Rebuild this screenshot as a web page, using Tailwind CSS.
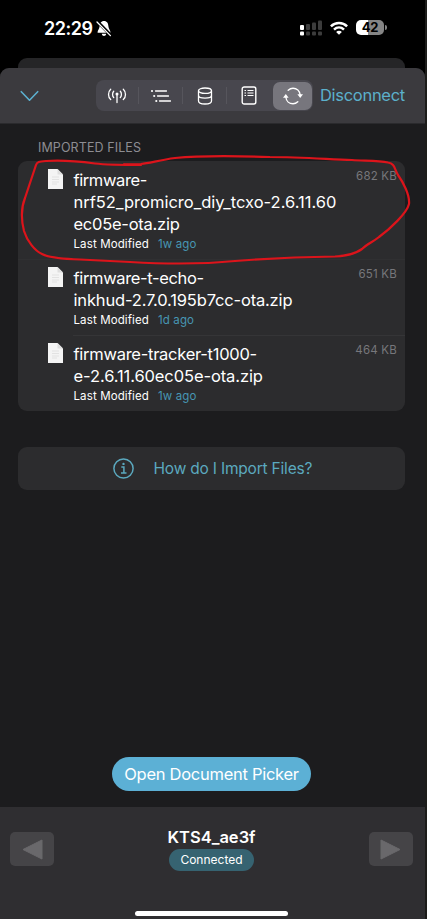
<!DOCTYPE html>
<html lang="en">
<head>
<meta charset="utf-8">
<title>Imported Files</title>
<script src="https://cdn.jsdelivr.net/npm/@tailwindcss/browser@4"></script>
</head>
<body class="bg-[#1c1c1a] w-[427px] h-[919px] overflow-hidden font-['Inter',sans-serif] text-white">
<div class="relative w-[425px] h-[919px] bg-black flex flex-col whitespace-nowrap">
  <!-- status bar -->
  <div class="h-[58px] shrink-0 flex justify-between pl-[44px] pr-[38px]">
    <div class="flex items-center h-[56px]">
      <span class="text-[18px] font-semibold tracking-[-0.5px] w-[52px]">22:29</span>
      <svg class="w-[16px] h-[17px]" viewBox="0 0 16 17"><path d="M8 1C5 1 3.7 3.5 3.6 6.2C3.5 9 1.6 10.3 1.6 12V12.8H14.4V12C14.4 10.3 12.5 9 12.4 6.2C12.3 3.5 11 1 8 1ZM5.8 13.8C6 15.2 7 16 8 16S10 15.2 10.2 13.8Z" fill="#fff"/><path d="M1.2 1.4L15 15.4" stroke="#000" stroke-width="3.2"/><path d="M1 2L14.4 15.6" stroke="#fff" stroke-width="1.3" stroke-linecap="round"/></svg>
    </div>
    <div class="flex items-center h-[55px]">
      <svg class="w-[22px] h-[16px] mr-[8px]" viewBox="0 0 22 16"><g fill="#fff"><rect y="5" width="4" height="5" rx="1"/><rect y="11.5" width="4" height="4" rx="1"/></g><g fill="#3c3c3c"><rect x="6" y="4" width="4" height="6" rx="1"/><rect x="12" y="2.500" width="4" height="7.500" rx="1"/><rect x="18" y=".5" width="4" height="9.500" rx="1"/><rect x="6" y="11.500" width="4" height="4" rx="1"/><rect x="12" y="11.500" width="4" height="4" rx="1"/><rect x="18" y="11.500" width="4" height="4" rx="1"/></g></svg>
      <svg class="w-[18px] h-[14px] mr-[8px]" viewBox="0 0 18 14" fill="none" stroke="#fff" stroke-width="2.500"><path d="M.9 5.300C5.400.8 12.600.8 17.100 5.300M4 8.600C6.900 5.800 11.100 5.800 14 8.600"/><path d="M9 13.700L6.100 10.900C7.700 9.400 10.300 9.400 11.900 10.900Z" fill="#fff" stroke="none"/></svg>
      <div class="w-[28px] h-[15px] rounded-[5px] bg-[linear-gradient(90deg,#fff_42%,#858585_42%)] text-black text-[13px] font-bold tracking-[-0.3px] leading-[15px] text-center">42</div>
      <div class="w-[2px] h-[5px] bg-[#858585] rounded-r-full ml-[1px]"></div>
    </div>
  </div>
  <div class="h-[10px] shrink-0 mx-[18px] mr-[20px] rounded-t-[9px] bg-[#252527]"></div>

  <div class="flex-1 flex flex-col bg-[#1c1c1e] rounded-t-[9px] overflow-hidden">
    <!-- toolbar -->
    <div class="h-[56px] shrink-0 bg-[#3b3a3e] border-b border-[#2a2a2d] flex items-center pl-[20px]">
      <svg class="w-[19px] h-[12px]" viewBox="0 0 19 12" fill="none" stroke="#5cb0cf" stroke-width="1.600" stroke-linecap="round" stroke-linejoin="round"><path d="M1.300 1.700L9.500 10.200L17.700 1.700"/></svg>
      <div class="ml-[57px] w-[217px] h-[31px] rounded-[8px] bg-[#48474e] flex items-center">
        <div class="w-[42px] flex justify-center">
          <svg class="w-[20px] h-[16px]" viewBox="0 0 20 16" fill="none" stroke="#fff" stroke-width="1.300" stroke-linecap="round"><path d="M10 6V14.500M6.700 3.300C5.200 4.900 5.200 7.900 6.700 9.500M13.300 3.300C14.800 4.900 14.800 7.900 13.300 9.500M3.700 1.200C.8 3.900.8 8.900 3.700 11.600M16.300 1.200C19.200 3.900 19.200 8.900 16.300 11.600"/><circle cx="10" cy="6" r="1.500" fill="#fff" stroke="none"/></svg>
        </div>
        <div class="w-px h-[17px] bg-[#56555c]"></div>
        <div class="w-[43px] flex justify-center">
          <svg class="w-[22px] h-[14px]" viewBox="0 0 22 14" fill="none" stroke="#fff" stroke-width="1.300" stroke-linecap="round"><path d="M5.500 2H16.500M7.500 7H18.500M9.500 12H20.500"/><g fill="#fff" stroke="none"><circle cx="2" cy="2" r="1.100"/><circle cx="4.200" cy="7" r="1.100"/><circle cx="6.300" cy="12" r="1.100"/></g></svg>
        </div>
        <div class="w-px h-[17px] bg-[#56555c]"></div>
        <div class="w-[43px] flex justify-center">
          <svg class="w-[16px] h-[18px]" viewBox="0 0 16 18" fill="none" stroke="#fff" stroke-width="1.300"><ellipse cx="8" cy="3.700" rx="6.500" ry="2.700"/><path d="M1.500 3.700V14C1.500 15.800 4.300 17 8 17S14.500 15.800 14.500 14V3.700M1.500 8.300C1.500 10 4.300 11.200 8 11.200S14.500 10 14.500 8.300"/></svg>
        </div>
        <div class="w-px h-[17px] bg-[#56555c]"></div>
        <div class="w-[43px] flex justify-center">
          <svg class="w-[16px] h-[19px]" viewBox="0 0 16 19" fill="none" stroke="#fff" stroke-width="1.400"><rect x="1.200" y="1" width="13.600" height="17" rx="2"/><path d="M3.500 4.500H5M3.500 7H5M3.500 9.500H5M6.500 4.500H12.500M6.500 7H12.500M6.500 9.500H12.500" stroke-width="1.200"/></svg>
        </div>
        <div class="w-[39px] h-[28px] ml-[3px] rounded-[7px] bg-[#77767d] flex items-center justify-center">
          <svg class="w-[20px] h-[18px]" viewBox="0 0 20 18" fill="none" stroke="#fff" stroke-width="1.400" stroke-linecap="round"><path d="M5.200 3.200C6.600 1.900 8.200 1.200 10 1.200C13.700 1.200 16.700 4 17.200 8M14.800 14.800C13.400 16.100 11.800 16.800 10 16.800C6.300 16.800 3.300 14 2.800 10"/><path d="M0 10.700L2.800 7L5.600 10.700ZM14.400 7.300L17.200 11L20 7.300Z" fill="#fff" stroke="none"/></svg>
        </div>
      </div>
      <span class="ml-[7px] text-[16.5px] tracking-[-0.3px] text-[#5cb0cb]">Disconnect</span>
    </div>

    <!-- file list -->
    <div class="pl-[18px] pr-[20px] pt-[14px]">
      <div class="pl-[20px] h-[23px] leading-[20px] text-[12.5px] tracking-[0.1px] text-[#8d8d92]">IMPORTED FILES</div>
      <div class="h-[250px] rounded-[9px] bg-[#2c2c2e]">
        <div class="flex h-[98px] pt-[8px] pl-[30px] pr-[8px]">
          <svg class="w-[15px] h-[20px] shrink-0" viewBox="0 0 15 20"><path d="M0 0H9.500L15 5.500V20H0Z" fill="#f4f4f4"/><path d="M9.500 0V5.500H15" fill="#dedede"/><path d="M4 8H11M4 10.500H11M4 13H11M4 15H9" stroke="#e2e2e2"/></svg>
          <div class="ml-[10.5px] flex-1 w-0">
            <div class="text-[16.500px] leading-[22px]"><span class="tracking-[-0.4px]">firmware-</span><br><span class="tracking-[0px]">nrf52_promicro_diy_tcxo-2.6.11.60</span><br><span class="tracking-[-0.25px]">ec05e-ota.zip</span></div>
            <div class="text-[11.500px] leading-[18px] tracking-[0.12px]">Last Modified<span class="text-[#4796b3] ml-[9px]">1w ago</span></div>
          </div>
          <div class="text-[11.500px] leading-[15px] tracking-[0.2px] text-[#77777b]">682 KB</div>
        </div>
        <div class="flex h-[76px] pt-[7px] pl-[30px] pr-[8px] border-t border-[#303032]">
          <svg class="w-[15px] h-[20px] shrink-0" viewBox="0 0 15 20"><path d="M0 0H9.500L15 5.500V20H0Z" fill="#f4f4f4"/><path d="M9.500 0V5.500H15" fill="#dedede"/><path d="M4 8H11M4 10.500H11M4 13H11M4 15H9" stroke="#e2e2e2"/></svg>
          <div class="ml-[10.5px] flex-1 w-0">
            <div class="text-[16.500px] leading-[22px]"><span class="tracking-[-0.35px]">firmware-t-echo-</span><br><span class="tracking-[-0.17px]">inkhud-2.7.0.195b7cc-ota.zip</span></div>
            <div class="text-[11.500px] leading-[18px] tracking-[0.12px]">Last Modified<span class="text-[#4796b3] ml-[9px]">1d ago</span></div>
          </div>
          <div class="text-[11.500px] leading-[15px] tracking-[0.2px] text-[#77777b]">651 KB</div>
        </div>
        <div class="h-px ml-[55px] bg-[#353537]"></div>
        <div class="flex h-[75px] pt-[7px] pl-[30px] pr-[8px]">
          <svg class="w-[15px] h-[20px] shrink-0" viewBox="0 0 15 20"><path d="M0 0H9.500L15 5.500V20H0Z" fill="#f4f4f4"/><path d="M9.500 0V5.500H15" fill="#dedede"/><path d="M4 8H11M4 10.500H11M4 13H11M4 15H9" stroke="#e2e2e2"/></svg>
          <div class="ml-[10.5px] flex-1 w-0">
            <div class="text-[16.500px] leading-[22px]"><span class="tracking-[-0.27px]">firmware-tracker-t1000-</span><br><span class="tracking-[-0.1px]">e-2.6.11.60ec05e-ota.zip</span></div>
            <div class="text-[11.500px] leading-[18px] tracking-[0.12px]">Last Modified<span class="text-[#4796b3] ml-[9px]">1w ago</span></div>
          </div>
          <div class="text-[11.500px] leading-[15px] tracking-[0.2px] text-[#77777b]">464 KB</div>
        </div>
      </div>
      <div class="mt-[36px] h-[43px] rounded-[9px] bg-[#2c2c2e] flex items-center pl-[95px] text-[#5ba9bf]">
        <svg class="w-[21px] h-[21px]" viewBox="0 0 21 21" fill="none" stroke="currentColor" stroke-width="1.500"><circle cx="10.500" cy="10.500" r="9.600"/><path d="M8.300 9H10.900V14.800M8 14.900H13.500"/><circle cx="10.500" cy="5.900" r="1.200" fill="currentColor" stroke="none"/></svg>
        <span class="ml-[19.5px] text-[15.500px] tracking-[-0.2px]">How do I Import Files?</span>
      </div>
    </div>

    <div class="flex-1 flex flex-col justify-end items-center pb-[16px]">
      <div class="w-[199px] h-[34px] mr-[2px] rounded-full bg-[#5cb0d5] flex items-center justify-center text-[16.500px] tracking-[-0.28px]">Open Document Picker</div>
    </div>

    <!-- device bar -->
    <div class="h-[112px] shrink-0 bg-[#2f2e31] flex flex-col">
      <div class="flex justify-between pl-[10px] pr-[12px] pt-[20px] h-[104px] shrink-0">
        <div class="w-[44px] h-[34px] mt-[5px] rounded-[5px] bg-[#454447] flex items-center justify-center"><svg class="w-[21px] h-[21px]" viewBox="0 0 21 21"><path d="M1 10.500L20 1V20Z" fill="#69686b" stroke="#69686b" stroke-linejoin="round"/></svg></div>
        <div class="flex flex-col items-center">
          <div class="text-[16.500px] leading-[20px] font-semibold">KTS4_ae3f</div>
          <div class="mt-[2px] w-[85px] h-[22px] rounded-full bg-[#366371] text-[12px] leading-[22px] text-center">Connected</div>
        </div>
        <div class="w-[44px] h-[34px] mt-[5px] rounded-[5px] bg-[#454447] flex items-center justify-center"><svg class="w-[21px] h-[21px]" viewBox="0 0 21 21"><path d="M20 10.500L1 1V20Z" fill="#69686b" stroke="#69686b" stroke-linejoin="round"/></svg></div>
      </div>
      <div class="w-[153px] h-[5px] ml-[135px] rounded-full bg-white shrink-0"></div>
    </div>
  </div>

  <!-- hand-drawn highlight -->
  <svg class="absolute left-0 top-0 w-[427px] h-[280px]" viewBox="0 0 427 280" fill="none" stroke="#dc141b" stroke-width="2.200" stroke-linecap="round" stroke-linejoin="round"><path d="M141 165C125 165 108 165 95 163.500C80 161.500 60 160 46 161C39 161.500 37 162 36 165L25 198C21 208 21 219 24 231C27 241 35 251 42 254C50 258 62 259 80 259.500L130 262C165 264 205 264 235 261C260 259 290 257 335 256.500C347 256 355 254 362 249C367 244 373 242 379 237C390 229 407 213 409 204C410 195 403 182 398 175C394 168 395 164 388 162.500C378 160 363 161 352 160C325 159 300 157 270 157C240 156 195 156 175 158C160 160 150 163 141 164L124 164.300"/></svg>
</div>
</body>
</html>
